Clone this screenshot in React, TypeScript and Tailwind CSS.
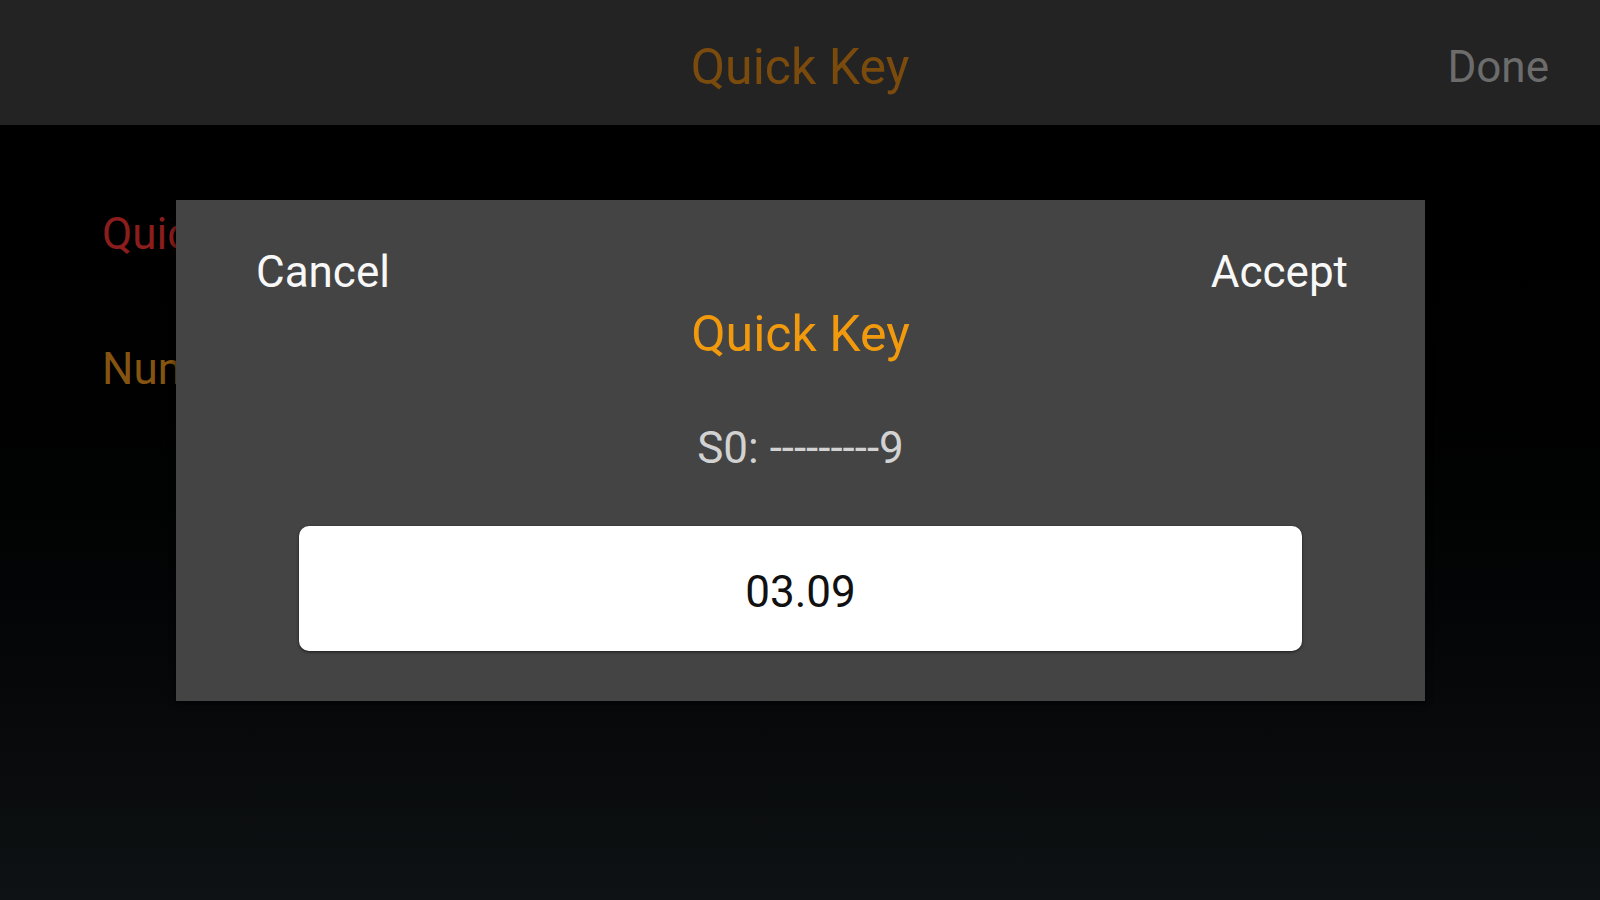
import React from 'react';

const font = { fontFamily: 'Roboto, "Noto Sans", sans-serif' };

export default function App() {
  return (
    <div className="w-[1600px] h-[900px] flex flex-col overflow-hidden bg-black" style={font}>
      {/* Top bar */}
      <div className="h-[125px] shrink-0 bg-[#232323] flex items-center relative">
        <div className="flex-1 text-center text-[50px] leading-[56px] text-[#7a4b0c] pt-[8px]">Quick Key</div>
        <div className="absolute right-[51px] top-[41px] text-[44px] leading-[52px] text-[#6c6c6c]">Done</div>
      </div>

      {/* Body */}
      <div className="flex-1 relative bg-gradient-to-b from-[#000000] to-[#0f1214]">
        <div className="flex flex-col pl-[102px] pt-[83px] gap-[83px]">
          <div className="text-[44px] leading-[52px] text-[#8b1d1d]">Quick Key</div>
          <div className="text-[44px] leading-[52px] text-[#855410]">Number</div>
        </div>

        {/* Dialog */}
        <div className="absolute left-[176px] top-[75px] w-[1249px] h-[501px] bg-[#444444] shadow-[0_2px_6px_rgba(0,0,0,0.7)] flex flex-col pt-[46px]">
          <div className="flex justify-between pl-[80px] pr-[77px] h-[52px] text-[44px] leading-[52px] text-[#f8f8f8]">
            <span>Cancel</span>
            <span>Accept</span>
          </div>
          <div className="mt-[8px] text-center text-[50px] leading-[56px] text-[#f29a0e]">Quick Key</div>
          <div className="mt-[60px] text-center text-[44px] leading-[52px] text-[#d2d2d2]">S0: ---------9</div>
          <div className="mt-[52px] mx-[123px] h-[125px] bg-white rounded-[10px] shadow-[0_1px_3px_rgba(0,0,0,0.6)] flex items-center justify-center">
            <span className="text-[44px] leading-[52px] text-[#111111] pt-[6px]">03.09</span>
          </div>
        </div>
      </div>
    </div>
  );
}
